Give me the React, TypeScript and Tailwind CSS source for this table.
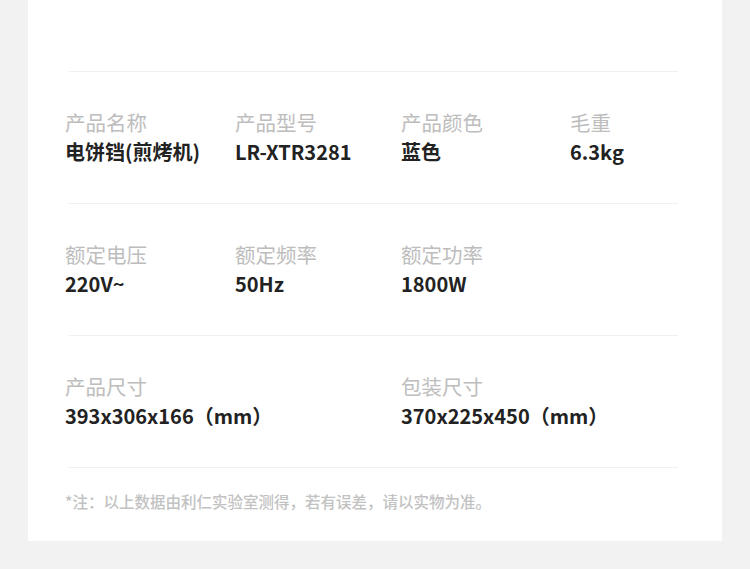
const rows = [
  [
    { label: "产品名称", value: "电饼铛(煎烤机)" },
    { label: "产品型号", value: "LR-XTR3281" },
    { label: "产品颜色", value: "蓝色" },
    { label: "毛重", value: "6.3kg" },
  ],
  [
    { label: "额定电压", value: "220V~" },
    { label: "额定频率", value: "50Hz" },
    { label: "额定功率", value: "1800W" },
  ],
  [
    { label: "产品尺寸", value: "393x306x166（mm）" },
    null,
    { label: "包装尺寸", value: "370x225x450（mm）" },
  ],
]

const Divider = () => <div className="ml-[41px] w-[609px] h-px bg-[#f0f0f0]" />

export default function App() {
  return (
    <div
      className="w-[750px] h-[569px] bg-[#f2f2f2]"
      style={{ fontFamily: '"Noto Sans CJK SC", "Noto Sans", sans-serif' }}
    >
      <div className="ml-[28px] w-[694px] h-[541px] bg-white pt-[71px]">
        {rows.map((row, i) => (
          <div key={i}>
            <Divider />
            <div className="grid grid-cols-[170px_166px_169px_1fr] pl-[37px] pt-[35px] pb-[36px]">
              {row.map((item, j) =>
                item ? (
                  <div key={j} className="flex flex-col whitespace-nowrap">
                    <span className="text-[20.5px] leading-[30px] text-[#bdbdbd]">{item.label}</span>
                    <span className="text-[20px] leading-[30px] font-bold text-[#222222]">{item.value}</span>
                  </div>
                ) : (
                  <div key={j} />
                )
              )}
            </div>
          </div>
        ))}
        <Divider />
        <p className="pl-[37px] pt-[22px] text-[15.5px] leading-[22px] font-medium text-[#c2c2c2]">
          *注：以上数据由利仁实验室测得，若有误差，请以实物为准。
        </p>
      </div>
    </div>
  )
}
